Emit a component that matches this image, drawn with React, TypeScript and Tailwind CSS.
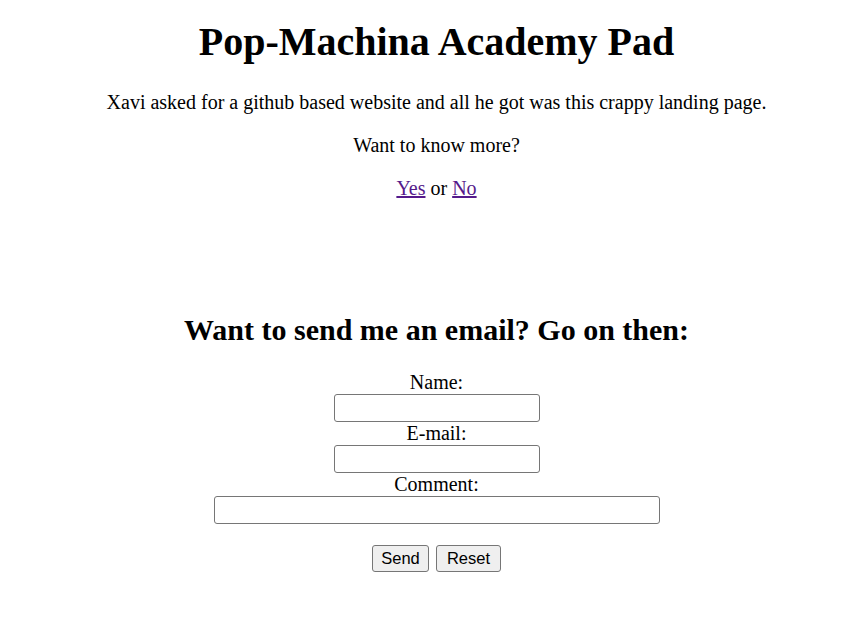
export default function App() {
  return (
    <div className="min-h-screen bg-white text-black [font-family:'Liberation_Serif',serif] text-[20px] text-center pl-[23px]">
      <h1 className="text-[40px] font-bold leading-[46px] pt-[19px]">Pop-Machina Academy Pad</h1>
      <p className="mt-[26px] leading-[23px]">
        Xavi asked for a github based website and all he got was this crappy landing page.
      </p>
      <p className="mt-[20px] leading-[23px]">Want to know more?</p>
      <p className="mt-[20px] leading-[23px]">
        <a href="#" className="underline text-[#551a8b]">Yes</a> or{" "}
        <a href="#" className="underline text-[#551a8b]">No</a>
      </p>

      <h2 className="mt-[112px] text-[30px] font-bold leading-[35px]">
        Want to send me an email? Go on then:
      </h2>

      <form className="mt-[24px] flex flex-col items-center">
        <label className="leading-[23px]">Name:</label>
        <input
          type="text"
          className="w-[206px] h-[28px] border border-[#767676] rounded-[3px] px-1"
        />
        <label className="leading-[23px]">E-mail:</label>
        <input
          type="text"
          className="w-[206px] h-[28px] border border-[#767676] rounded-[3px] px-1"
        />
        <label className="leading-[23px]">Comment:</label>
        <input
          type="text"
          className="w-[446px] h-[28px] border border-[#767676] rounded-[3px] px-1"
        />
        <div className="mt-[21px] flex gap-[7px] [font-family:'Liberation_Sans',sans-serif] text-[16.5px]">
          <button type="submit" className="w-[57px] h-[27px] bg-[#efefef] border border-[#767676] rounded-[3px]">
            Send
          </button>
          <button type="reset" className="w-[65px] h-[27px] bg-[#efefef] border border-[#767676] rounded-[3px]">
            Reset
          </button>
        </div>
      </form>
    </div>
  );
}
